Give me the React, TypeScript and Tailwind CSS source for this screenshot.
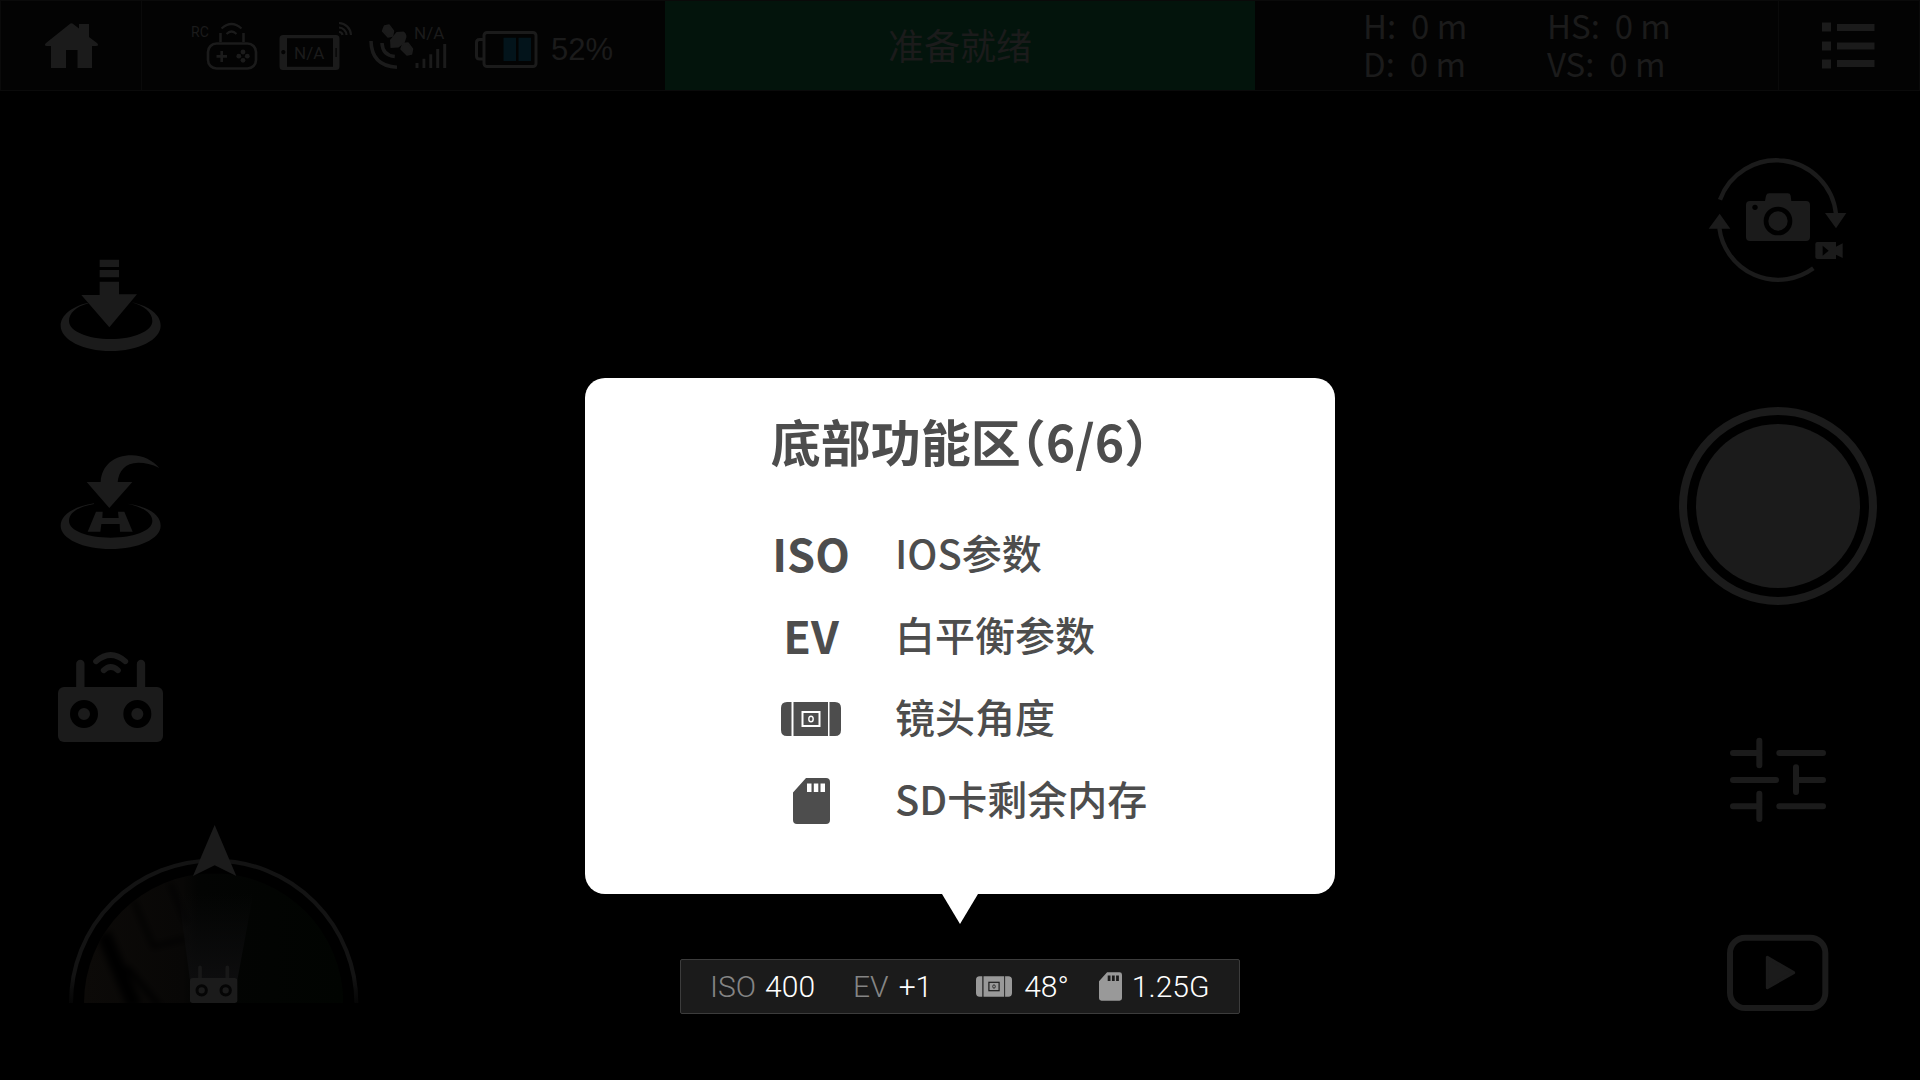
import type { ReactNode } from "react";

const ink = "#1b1b1b";

function IconButton({ label, className = "", children }: { label: string; className?: string; children: ReactNode }) {
  return (
    <button type="button" aria-label={label} className={`block shrink-0 ${className}`}>
      {children}
    </button>
  );
}

function HomeIcon() {
  return (
    <svg width="56" height="48" viewBox="43 22 56 48" fill={ink}>
      <path d="M69.5 24.2Q71.5 22.4 73.5 24.2L79 28.6V24H89V37L97 43Q99.500 46 96 46H92V68H77.500V50H66V68H51V46H47Q43.500 46 46 43Z" />
    </svg>
  );
}

function GamepadIcon() {
  return (
    <svg width="72" height="60" viewBox="190 16 72 60" fill="none" stroke={ink} strokeWidth="2.600">
      <text x="191" y="37" fontSize="14" fill={ink} stroke="none">RC</text>
      <path d="M221.500 28.500Q231.500 19.500 241.500 28.500M226.500 34Q231.500 29 236.500 34" strokeWidth="2.200" />
      <path d="M220.500 33V42M243.500 33V42" />
      <rect x="208" y="43.500" width="48" height="25" rx="8.500" />
      <path d="M221.700 51V62M216.500 56.400H227" />
      <g fill={ink} stroke="none">
        <circle cx="243" cy="52" r="2.400" />
        <circle cx="243" cy="60.300" r="2.400" />
        <circle cx="238.800" cy="56.200" r="2.400" />
        <circle cx="247.300" cy="56.200" r="2.400" />
      </g>
    </svg>
  );
}

function TabletIcon() {
  return (
    <svg width="80" height="60" viewBox="276 16 80 60">
      <path
        fill={ink}
        fillRule="evenodd"
        d="M283 35H336Q339.500 35 339.500 38.500V66.500Q339.500 70 336 70H283Q279.500 70 279.500 66.500V38.500Q279.500 35 283 35ZM287 38.200V66.800H333V38.200ZM283.300 50A2.100 2.100 0 1 0 283.310 50ZM335.500 48V57H336.700V48Z"
      />
      <g fill="none" stroke={ink} strokeWidth="2.200">
        <path d="M339 23A12.500 12.500 0 0 1 351 35M339 27.500A8 8 0 0 1 346.500 35M339 32A3.500 3.500 0 0 1 342.500 35" />
      </g>
      <text x="294" y="58.500" fontSize="17" fill={ink}>N/A</text>
    </svg>
  );
}

function SatelliteIcon() {
  return (
    <svg width="82" height="60" viewBox="368 16 82 60" fill={ink}>
      <g fill="none" stroke={ink} strokeWidth="3.600">
        <path d="M371 41Q371.500 66 397 67.200" />
        <path d="M382 43Q382.500 55.500 394.800 56.500" />
      </g>
      <path d="M384.500 26L389 25L393.500 31L392.500 36L388 37L382.500 31Z" stroke={ink} strokeWidth="1.500" strokeLinejoin="round" />
      <path d="M396.500 32L403.500 31.500Q406.500 33 406.500 37L404.500 43L398.500 47.500L390.500 48L390 40Z" />
      <path d="M403 43.500L408 43L412.500 49L411.500 54L407 55L401 49Z" stroke={ink} strokeWidth="1.500" strokeLinejoin="round" />
      <path d="M415.500 63H418.500V68H415.500ZM422.500 58.700H425.300V68H422.500ZM429.300 54.300H432.200V68H429.300ZM436.200 49H439.200V68H436.200ZM443.200 44H446.200V68H443.200Z" />
      <text x="414" y="39.300" fontSize="17">N/A</text>
    </svg>
  );
}

function BatteryIcon() {
  return (
    <svg width="68" height="60" viewBox="472 16 68 60">
      <g fill="none" stroke={ink} strokeWidth="3">
        <path d="M482 39.500H478.500Q475.500 39.500 475.500 42.500V56Q475.500 59 478.500 59H482" />
        <rect x="483" y="32.500" width="52" height="34" rx="3" />
      </g>
      <path fill="#03141b" d="M502.500 37.700H515V61H502.500ZM517.500 37.700H530V61H517.500Z" />
    </svg>
  );
}

function MenuIcon() {
  return (
    <svg width="60" height="50" viewBox="1820 21 60 50" fill={ink}>
      <path d="M1823 22.500h9v9h-9zM1823 41.500h9v9h-9zM1823 59.500h9v9h-9zM1838 24h37.500v7h-37.500zM1838 42.500h37.500v7h-37.500zM1838 60h37.500v7h-37.500z" />
    </svg>
  );
}

function TakeoffIcon() {
  return (
    <svg width="140" height="110" viewBox="0 30 420 330" fill={ink}>
      <path d="M179 59H237V81H179ZM179 90H237V112H179ZM179 125H237V163H291L208 262L124 165H179Z" />
      <path d="M145 188C95 199 62 226 62 257C62 299 129 333 212 333C295 333 362 299 362 257C362 226 330 198 275 187C313 198 337 218 337 243C337 274 281 297 212 297C143 297 87 274 87 243C87 220 108 200 145 190Z" />
    </svg>
  );
}

function ReturnIcon() {
  return (
    <svg width="140" height="110" viewBox="0 630 420 330" fill={ink}>
      <path d="M140 726H182C185 676 222 646 275 646C310 646 338 662 358 684C336 672 315 668 295 668C255 668 236 694 233 726H277L208 804Z" />
      <path d="M162 790C100 800 62 825 62 857C62 896 129 927 212 927C295 927 362 896 362 857C362 825 325 799 262 791C310 801 337 820 337 843C337 872 281 893 212 893C143 893 87 872 87 843C87 820 110 801 162 792Z" />
      <path d="M168 815H188L187 834H236L234 815H253L278 875H240L239 852H184L181 875H143Z" />
    </svg>
  );
}

function RemoteIcon() {
  return (
    <svg width="140" height="110" viewBox="0 30 420 330">
      <g fill="none" stroke={ink} strokeLinecap="round">
        <path strokeWidth="17" d="M168 94Q212 56 256 94M191 121Q212 101 234 121" />
        <path strokeWidth="25" d="M121 102V180M303 102V180" />
      </g>
      <rect x="54" y="171" width="315" height="165" rx="18" fill={ink} />
      <g fill={ink} stroke="#000" strokeWidth="24">
        <circle cx="132" cy="252" r="30" />
        <circle cx="292" cy="252" r="30" />
      </g>
    </svg>
  );
}

function MiniMap() {
  return (
    <svg width="310" height="200" viewBox="0 0 930 600" role="img" aria-label="地图">
      <defs>
        <clipPath id="mapClip">
          <path d="M72 579A389 389 0 0 1 850 579Z" />
        </clipPath>
        <linearGradient id="ground" x1="0" x2="1" y1="0" y2="0">
          <stop offset="0" stopColor="#0c0a08" />
          <stop offset="0.380" stopColor="#080706" />
          <stop offset="0.440" stopColor="#030403" />
          <stop offset="1" stopColor="#010401" />
        </linearGradient>
        <linearGradient id="beam" x1="0" x2="0" y1="0" y2="1">
          <stop offset="0" stopColor="#0d0d0e" stopOpacity="0" />
          <stop offset="1" stopColor="#0d0d0e" />
        </linearGradient>
        <linearGradient id="ringFade" gradientUnits="userSpaceOnUse" x1="0" y1="500" x2="0" y2="580">
          <stop offset="0" stopColor="#131313" />
          <stop offset="1" stopColor="#050505" />
        </linearGradient>
        <filter id="soften">
          <feGaussianBlur stdDeviation="9" />
        </filter>
      </defs>
      <path d="M33 579A428 428 0 0 1 889 579" fill="none" stroke="url(#ringFade)" strokeWidth="12" />
      <g clipPath="url(#mapClip)">
        <rect x="72" y="190" width="778" height="390" fill="url(#ground)" />
        <g fill="none" stroke="#040403" filter="url(#soften)">
          <path d="M130 370L225 590" strokeWidth="44" />
          <path d="M220 270L280 410L380 385M330 220L380 340" strokeWidth="11" />
          <path d="M200 470L300 590" strokeWidth="16" />
        </g>
        <path d="M355 250H580L532 510H390Z" fill="url(#beam)" />
      </g>
      <path d="M464 45L529 198L464 166L399 198Z" fill={ink} />
      <path d="M420 472V510M502 472V510" stroke="#181818" strokeWidth="11" strokeLinecap="round" />
      <rect x="390" y="504" width="142" height="75" rx="8" fill={ink} />
      <g fill={ink} stroke="#050505" strokeWidth="9">
        <circle cx="425" cy="541" r="14" />
        <circle cx="497" cy="541" r="14" />
      </g>
    </svg>
  );
}

function CameraSwitchIcon() {
  return (
    <svg width="180" height="160" viewBox="0 0 540 480" fill={ink}>
      <g fill="none" stroke={ink} strokeWidth="13">
        <path d="M90 179A180 180 0 0 1 438 222" />
        <path d="M88 264A178 178 0 0 0 370 385" />
      </g>
      <path d="M405 219H469L438 265ZM56 266H121L89 221Z" />
      <path d="M180 183H225L228 167Q230 160 238 160H293Q301 160 302 167L304 183H348Q360 183 360 195V291Q360 303 348 303H180Q168 303 168 291V195Q168 183 180 183Z" />
      <circle cx="264" cy="243" r="36" stroke="#000" strokeWidth="14" />
      <circle cx="195" cy="202" r="8" fill="#000" />
      <path fillRule="evenodd" d="M382 306H438V320L458 310V354L438 344V357H382Q376 357 376 351V312Q376 306 382 306ZM398 317V347L416 332Z" />
    </svg>
  );
}

function SlidersIcon() {
  return (
    <svg width="160" height="120" viewBox="0 0 480 360" fill="none" stroke={ink} strokeWidth="18" strokeLinecap="round">
      <path d="M99 99H178M238 99H369M178 62V136M99 180H228M288 180H369M288 142V216M99 259H178M238 259H369M178 221V297" />
    </svg>
  );
}

function PlaybackIcon() {
  return (
    <svg width="160" height="100" viewBox="0 600 480 300">
      <rect x="90" y="653" width="286" height="211" rx="46" fill="none" stroke={ink} strokeWidth="18" />
      <path d="M202 712V803L281 758Z" fill={ink} stroke={ink} strokeWidth="9" strokeLinejoin="round" />
    </svg>
  );
}

function LensIcon({ className, line }: { className: string; line: string }) {
  return (
    <svg viewBox="0 0 60 34" className={className} fill="currentColor">
      <path d="M6 0H10.500V34H6Q0 34 0 28V6Q0 0 6 0ZM12.500 0H47V34H12.500ZM48.500 0H54Q60 0 60 6V28Q60 34 54 34H48.500Z" />
      <g fill="none" stroke={line}>
        <rect x="21.500" y="10" width="17" height="14" strokeWidth="2" />
        <ellipse cx="30" cy="17" rx="2.200" ry="2.800" strokeWidth="1.400" />
      </g>
    </svg>
  );
}

function SdCardIcon({ className }: { className: string }) {
  return (
    <svg viewBox="0 0 37 46" className={className} fill="currentColor">
      <path
        fillRule="evenodd"
        d="M13 0H33Q37 0 37 4V42Q37 46 33 46H4Q0 46 0 42V14.500ZM14 5.500V14H18.500V5.500ZM20.800 5.500V14H25.300V5.500ZM27.500 5.500V14H32V5.500Z"
      />
    </svg>
  );
}

function Header() {
  return (
    <header className="grid h-[91px] grid-cols-[141px_1fr_590px_1fr_141px] border border-[#0a0a0a] bg-[#030303] text-[#1b1b1b]">
      <div className="flex items-center justify-center border-r border-[#0a0a0a]">
        <IconButton label="主页">
          <HomeIcon />
        </IconButton>
      </div>
      <div className="flex items-center pl-12 font-['Roboto',sans-serif]">
        <GamepadIcon />
        <div className="ml-3.5"><TabletIcon /></div>
        <div className="ml-3"><SatelliteIcon /></div>
        <div className="ml-[23px]"><BatteryIcon /></div>
        <span className="ml-2.5 pt-2 font-['Liberation_Sans',sans-serif] text-[31px] leading-none">52%</span>
      </div>
      <div className="flex items-center justify-center bg-[#03140c] pb-1 text-[36px] leading-none">准备就绪</div>
      <dl className="grid grid-cols-[184px_1fr] content-center pb-1 pl-[108px] text-[33px] leading-[38px] whitespace-pre">
        <div className="flex"><dt>H:  </dt><dd>0 m</dd></div>
        <div className="flex"><dt>HS:  </dt><dd>0 m</dd></div>
        <div className="flex"><dt>D:  </dt><dd>0 m</dd></div>
        <div className="flex"><dt>VS:  </dt><dd>0 m</dd></div>
      </dl>
      <div className="flex items-center justify-center border-l border-[#0a0a0a]">
        <IconButton label="菜单">
          <MenuIcon />
        </IconButton>
      </div>
    </header>
  );
}

const rows: { icon: ReactNode; text: string }[] = [
  { icon: <b className="pb-1.5">ISO</b>, text: "IOS参数" },
  { icon: <b className="pb-1.5">EV</b>, text: "白平衡参数" },
  { icon: <LensIcon className="h-[34px] w-[60px]" line="#fff" />, text: "镜头角度" },
  { icon: <SdCardIcon className="h-[46px] w-[37px]" />, text: "SD卡剩余内存" },
];

function GuideCard() {
  return (
    <section className="flex w-full flex-col items-center">
      <div className="w-full rounded-[20px] bg-white pt-[29px] pb-[52px] text-[#4d4d4d]">
        <h1 className="text-center text-[50px] leading-[66px] font-bold [font-feature-settings:'halt']">底部功能区（6/6）</h1>
        <ul className="mt-[41px] pl-[186px]">
          {rows.map((row) => (
            <li key={row.text} className="flex h-[82px] items-center gap-11">
              <span className="flex w-20 shrink-0 items-center justify-center text-[45px] leading-none">{row.icon}</span>
              <span className="pb-1.5 text-[40px] leading-none font-medium">{row.text}</span>
            </li>
          ))}
        </ul>
      </div>
      <svg width="36" height="30" viewBox="0 0 36 30" fill="#fff">
        <path d="M0 0H36L18 30Z" />
      </svg>
    </section>
  );
}

function StatusBar() {
  return (
    <div className="mt-[35px] flex h-[55px] w-[560px] items-center rounded-[2px] border border-[#3c3c3c] bg-[#1b1b1b] pl-[29px] font-['Roboto',sans-serif] text-[30px] leading-none font-light text-white">
      <span className="text-[#858585]">ISO</span>
      <span className="ml-[9px]">400</span>
      <span className="ml-[38px] text-[#858585]">EV</span>
      <span className="ml-2.5">+1</span>
      <LensIcon className="ml-11 h-[21px] w-9 text-[#999]" line="#1b1b1b" />
      <span className="ml-3">48°</span>
      <SdCardIcon className="ml-[30px] h-[29px] w-[23px] text-[#999]" />
      <span className="ml-2.5">1.25G</span>
    </div>
  );
}

export default function App() {
  return (
    <div className="flex min-h-screen flex-col bg-black font-['Noto_Sans_CJK_SC',sans-serif]" lang="zh-CN">
      <Header />
      <main className="grid flex-1 grid-cols-[1fr_750px_1fr]">
        <nav className="flex flex-col items-start pt-[159px] pl-10">
          <IconButton label="起飞"><TakeoffIcon /></IconButton>
          <IconButton label="返航" className="mt-[90px]"><ReturnIcon /></IconButton>
          <IconButton label="遥控器" className="mt-20"><RemoteIcon /></IconButton>
          <div className="mt-[60px] ml-5"><MiniMap /></div>
        </nav>
        <div className="flex flex-col items-center pt-[287px]">
          <GuideCard />
          <StatusBar />
        </div>
        <aside className="flex flex-col items-end pt-[49px] pr-5">
          <div className="flex w-60 flex-col items-center">
            <IconButton label="切换拍照与录像"><CameraSwitchIcon /></IconButton>
            <button
              type="button"
              aria-label="拍摄"
              className="mt-[107px] mr-1 flex size-[198px] items-center justify-center rounded-full border-8 border-[#1b1b1b]"
            >
              <span className="size-[164px] rounded-full bg-[#1b1b1b]" />
            </button>
            <IconButton label="相机设置" className="mt-[115px]"><SlidersIcon /></IconButton>
            <IconButton label="回放" className="mt-20"><PlaybackIcon /></IconButton>
          </div>
        </aside>
      </main>
    </div>
  );
}
